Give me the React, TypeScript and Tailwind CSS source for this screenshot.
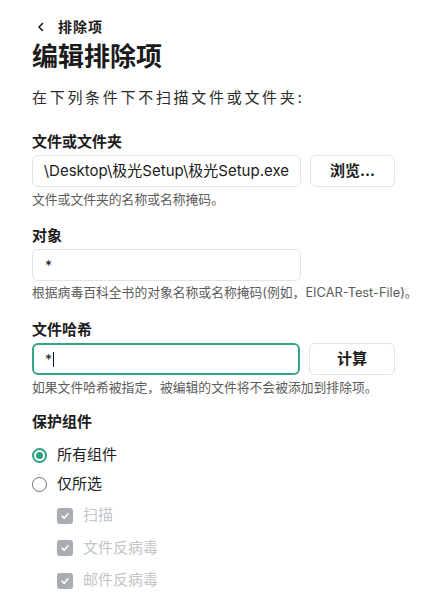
import React from "react";

const font = { fontFamily: 'Inter, "Noto Sans CJK SC", sans-serif' };

function Check() {
  return (
    <span className="flex h-[16px] w-[16px] items-center justify-center rounded-[3px] bg-[#a9adb2]">
      <svg width="10" height="10" viewBox="0 0 10 10" fill="none">
        <path d="M2 5.2 L4.2 7.2 L8 2.8" stroke="white" strokeWidth="1.6" strokeLinecap="round" strokeLinejoin="round" />
      </svg>
    </span>
  );
}

export default function App() {
  return (
    <div className="min-h-[615px] w-[427px] bg-white px-[32px] text-[#1b1b1b]" style={font}>
      <div className="mt-[17px] flex h-[20px] items-center text-[14px] font-bold leading-[20px] tracking-[1px]">
        <svg width="12" height="12" viewBox="0 0 12 12" className="ml-[3px] mr-[11px]" fill="none">
          <path d="M7.5 2.5 L4 6 L7.5 9.5" stroke="#1b1b1b" strokeWidth="1.6" strokeLinecap="round" strokeLinejoin="round" />
        </svg>
        <span>排除项</span>
      </div>
      <h1 className="mt-[3px] text-[26px] font-bold leading-[34px]">编辑排除项</h1>
      <p className="mt-[14px] whitespace-nowrap text-[15px] leading-[20px] tracking-[2.7px] text-[#2b2b2b]">在下列条件下不扫描文件或文件夹:</p>

      <div className="mt-[24px] text-[15px] font-bold leading-[20px]">文件或文件夹</div>
      <div className="mt-[3px] flex gap-[9px]">
        <div className="flex h-[32px] w-[269px] items-center rounded-[6px] border border-[#e3e3e3] px-[11px]">
          <div className="flex w-full justify-end overflow-hidden whitespace-nowrap text-[15px] text-[#1b1b1b]">
            <span>\Desktop\极光Setup\极光Setup.exe</span>
          </div>
        </div>
        <button className="flex h-[32px] w-[86px] items-center justify-center rounded-[6px] border border-[#e3e3e3] bg-white text-[15px] font-bold">
          浏览...
        </button>
      </div>
      <div className="mt-[5px] whitespace-nowrap text-[12.8px] leading-[16px] text-[#5c5c5c]">文件或文件夹的名称或名称掩码。</div>

      <div className="mt-[18px] text-[15px] font-bold leading-[20px]">对象</div>
      <div className="mt-[3px] flex h-[32px] w-[269px] items-center rounded-[6px] border border-[#e3e3e3] px-[12px] text-[14px]">
        *
      </div>
      <div className="mt-[4px] whitespace-nowrap text-[12.8px] leading-[16px] text-[#5c5c5c]">
        根据病毒百科全书的对象名称或名称掩码(例如，EICAR-Test-File)。
      </div>

      <div className="mt-[19px] text-[15px] font-bold leading-[20px]">文件哈希</div>
      <div className="mt-[3px] flex gap-[9px]">
        <div className="flex h-[32px] w-[269px] items-center rounded-[6px] border-2 border-[#35a58a] px-[11px] text-[14px]">
          <span>*</span>
          <span className="ml-[1px] inline-block h-[15px] w-[1px] bg-[#111]" />
        </div>
        <button className="flex h-[32px] w-[86px] items-center justify-center rounded-[6px] border border-[#e3e3e3] bg-white text-[15px] font-bold">
          计算
        </button>
      </div>
      <div className="mt-[5px] whitespace-nowrap text-[12.8px] leading-[16px] text-[#5c5c5c]">
        如果文件哈希被指定，被编辑的文件将不会被添加到排除项。
      </div>

      <div className="mt-[16px] text-[15px] font-bold leading-[20px]">保护组件</div>
      <div className="mt-[8px] flex h-[30px] items-center gap-[10px] text-[15px]">
        <span className="flex h-[15px] w-[15px] items-center justify-center rounded-full border-2 border-[#2aa183]">
          <span className="h-[7px] w-[7px] rounded-full bg-[#2aa183]" />
        </span>
        <span>所有组件</span>
      </div>
      <div className="flex h-[29px] items-center gap-[10px] text-[15px]">
        <span className="h-[15px] w-[15px] rounded-full border-[1.5px] border-[#6b6f74]" />
        <span>仅所选</span>
      </div>
      <div className="ml-[25px] flex flex-col text-[15px] text-[#c2c5c9]">
        <div className="flex h-[33px] items-center gap-[10px]">
          <Check />
          <span>扫描</span>
        </div>
        <div className="flex h-[32px] items-center gap-[10px]">
          <Check />
          <span>文件反病毒</span>
        </div>
        <div className="flex h-[33px] items-center gap-[10px]">
          <Check />
          <span>邮件反病毒</span>
        </div>
      </div>
    </div>
  );
}
